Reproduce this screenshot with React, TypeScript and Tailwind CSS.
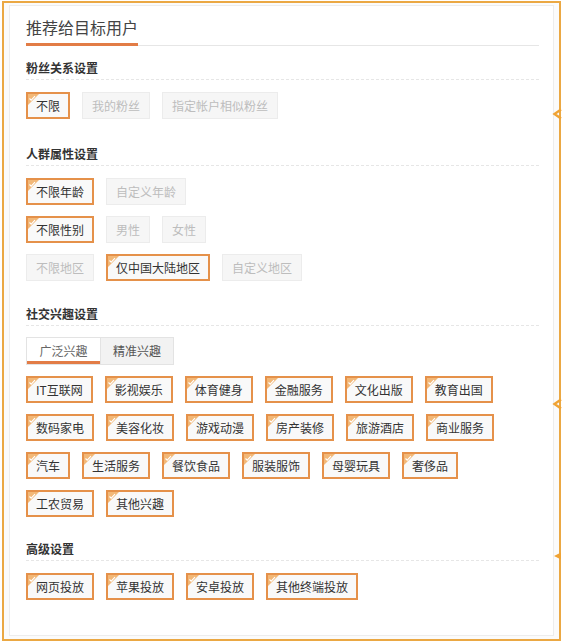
import React from "react";

type Opt = { label: string; on?: boolean };

// little orange corner with a tick, shown on the chosen options
function Corner() {
  return (
    <svg className="absolute left-0 top-0" width="11" height="11" viewBox="0 0 11 11">
      <polygon points="0,0 11,0 0,11" fill="#f2b878" />
      <polyline points="1.5,4.5 3.2,6.2 7,2.2" fill="none" stroke="#fff" strokeWidth="1.1" />
    </svg>
  );
}

function Chip({ label, on }: Opt) {
  if (on) {
    return (
      <div className="relative flex h-[27px] items-center border-2 border-[#e5914a] bg-[#f9f9f9] px-[8px] text-[12px] text-[#333]">
        <Corner />
        {label}
      </div>
    );
  }
  return (
    <div className="flex h-[27px] items-center border border-[#ececec] bg-[#f6f6f6] px-[9px] text-[12px] text-[#bdbdbd]">
      {label}
    </div>
  );
}

function Heading({ title, className }: { title: string; className: string }) {
  return (
    <div className={className + " border-b border-dashed border-[#e6e6e6] pb-[2px]"}>
      <div className="text-[12px] font-bold leading-[18px] text-[#333]">{title}</div>
    </div>
  );
}

function Rows({ rows, className }: { rows: Opt[][]; className: string }) {
  return (
    <div className={className + " flex flex-col gap-[11px]"}>
      {rows.map((row, i) => (
        <div key={i} className="flex gap-[12px]">
          {row.map((o) => (
            <Chip key={o.label} {...o} />
          ))}
        </div>
      ))}
    </div>
  );
}

const fans: Opt[][] = [
  [{ label: "不限", on: true }, { label: "我的粉丝" }, { label: "指定帐户相似粉丝" }],
];

const people: Opt[][] = [
  [{ label: "不限年龄", on: true }, { label: "自定义年龄" }],
  [{ label: "不限性别", on: true }, { label: "男性" }, { label: "女性" }],
  [{ label: "不限地区" }, { label: "仅中国大陆地区", on: true }, { label: "自定义地区" }],
];

const interests: string[][] = [
  ["IT互联网", "影视娱乐", "体育健身", "金融服务", "文化出版", "教育出国"],
  ["数码家电", "美容化妆", "游戏动漫", "房产装修", "旅游酒店", "商业服务"],
  ["汽车", "生活服务", "餐饮食品", "服装服饰", "母婴玩具", "奢侈品"],
  ["工农贸易", "其他兴趣"],
];

const advanced: string[][] = [["网页投放", "苹果投放", "安卓投放", "其他终端投放"]];

const allOn = (rows: string[][]): Opt[][] => rows.map((r) => r.map((label) => ({ label, on: true })));

function Notch({ top, solid }: { top: number; solid?: boolean }) {
  return (
    <svg className="absolute left-[552px]" style={{ top }} width="10" height="12" viewBox="0 0 10 12">
      {solid ? (
        <polygon points="9,2.5 2,6 9,9.5" fill="#f0a334" />
      ) : (
        <polyline points="9,1.5 2.5,6 9,10.5" fill="none" stroke="#f0a334" strokeWidth="2.4" />
      )}
    </svg>
  );
}

export default function App() {
  return (
    <div className="relative h-[644px] w-[565px] bg-white font-['Noto_Sans_CJK_SC',sans-serif]">
      <div className="ml-[2px] mt-[1px] h-[640px] w-[559px] border-2 border-[#eba843] bg-[#fbfbfb] pb-[3px] pl-[5px] pr-[5px] pt-[2px]">
        <div className="h-full border border-[#ededed] bg-white pl-[16px] pr-[14px] pt-[10px]">
          <div className="flex border-b border-[#e6e6e6]">
            <div className="-mb-px border-b-[3px] border-[#e27c46] pb-[5px] text-[16px] leading-[22px] text-[#444]">
              推荐给目标用户
            </div>
          </div>

          <Heading title="粉丝关系设置" className="mt-[13px]" />
          <Rows rows={fans} className="mt-[12px]" />

          <Heading title="人群属性设置" className="mt-[26px]" />
          <Rows rows={people} className="mt-[12px]" />

          <Heading title="社交兴趣设置" className="mt-[24px]" />
          <div className="mt-[11px] flex h-[28px] w-fit border border-[#e3e3e3] text-[12px]">
            <div className="flex w-[73px] items-center justify-center border-b-[3px] border-[#e27c46] bg-white pt-[3px] text-[#666]">
              广泛兴趣
            </div>
            <div className="flex w-[73px] items-center justify-center border-l border-[#e3e3e3] bg-[#f2f2f2] text-[#555]">
              精准兴趣
            </div>
          </div>
          <Rows rows={allOn(interests)} className="mt-[11px]" />

          <Heading title="高级设置" className="mt-[23px]" />
          <Rows rows={allOn(advanced)} className="mt-[12px]" />
        </div>
      </div>

      <Notch top={107} />
      <Notch top={397} />
      <Notch top={549} solid />
    </div>
  );
}
